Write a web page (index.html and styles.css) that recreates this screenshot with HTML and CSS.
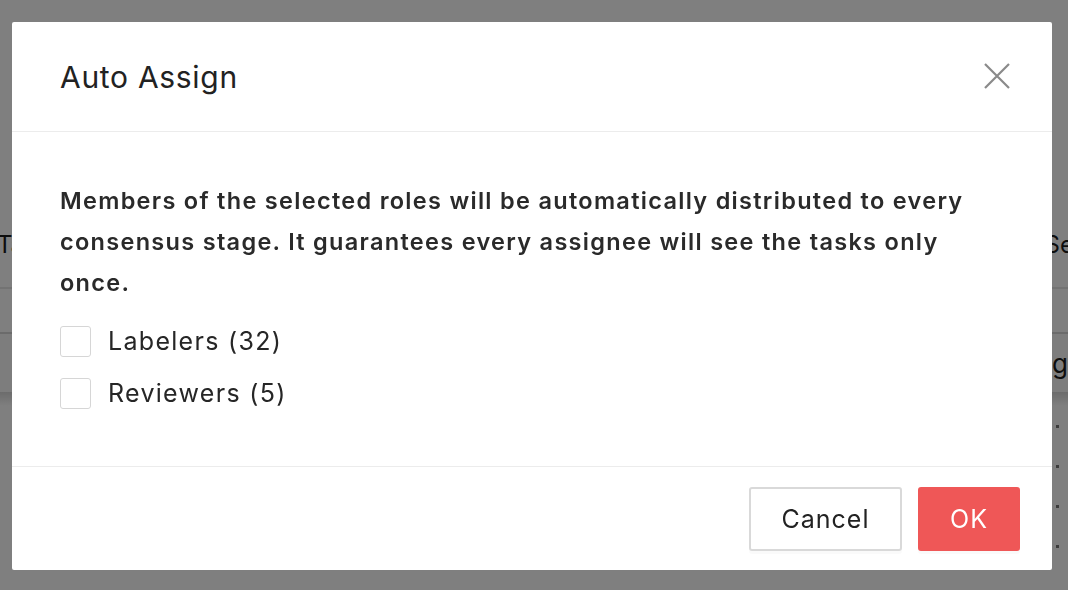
FILE: index.html
```html
<!DOCTYPE html>
<html lang="en">
<head>
<meta charset="utf-8">
<title>Auto Assign</title>
<link rel="stylesheet" href="styles.css">
</head>
<body>
<div class="page">
  <div class="page-spacer"></div>
  <div class="page-tabs">
    <span class="tab-left">Task list</span>
    <span class="tab-right">Se</span>
  </div>
  <div class="page-filter"></div>
  <div class="page-head">
    <span class="head-right">Tag</span>
  </div>
  <div class="page-shadow"></div>
  <div class="page-row"><span class="dot"></span></div>
  <div class="page-row"><span class="dot"></span></div>
  <div class="page-row"><span class="dot"></span></div>
  <div class="page-row"><span class="dot"></span></div>
</div>
<div class="overlay"></div>
<div class="modal" role="dialog">
  <div class="modal-header">
    <h2 class="modal-title">Auto Assign</h2>
    <button class="close" aria-label="Close">
      <svg viewBox="0 0 26 26" width="26" height="26"><path d="M1 1L25 25M25 1L1 25" stroke="#8a8a8a" stroke-width="2.2" fill="none"/></svg>
    </button>
  </div>
  <div class="modal-body">
    <p class="desc">Members of the selected roles will be automatically distributed to every consensus stage. It guarantees every assignee will see the tasks only once.</p>
    <label class="check-row"><span class="box"></span><span class="check-label">Labelers (32)</span></label>
    <label class="check-row"><span class="box"></span><span class="check-label">Reviewers (5)</span></label>
  </div>
  <div class="modal-footer">
    <button class="btn btn-default">Cancel</button>
    <button class="btn btn-primary">OK</button>
  </div>
</div>
</body>
</html>
```
FILE: styles.css
```css
html, body {
  margin: 0;
  padding: 0;
  width: 1068px;
  height: 590px;
  overflow: hidden;
  background: #ffffff;
  font-family: Inter, "Noto Sans", "Liberation Sans", sans-serif;
  color: #262626;
}

.page {
  width: 1068px;
  height: 590px;
  display: flex;
  flex-direction: column;
}
.page-spacer { height: 222px; }
.page-tabs {
  height: 44px;
  display: flex;
  justify-content: space-between;
  align-items: center;
  font-size: 24px;
  color: #1a1a1a;
  padding-bottom: 21px;
  border-bottom: 2px solid #e6e6e6;
}
.tab-left { margin-left: -3px; }
.tab-right { margin-right: -6px; }
.page-filter {
  height: 43px;
  border-bottom: 2px solid #d6d6d6;
}
.page-head {
  height: 58px;
  background: #fafafa;
  display: flex;
  justify-content: flex-end;
  align-items: center;
  font-size: 26px;
  color: #1a1a1a;
}
.head-right { margin-right: 0; }
.page-shadow {
  height: 14px;
  background: linear-gradient(#d8d8d8, #ffffff);
}
.page-row {
  height: 40px;
  display: flex;
  justify-content: flex-end;
  align-items: center;
}
.dot {
  width: 3px;
  height: 3px;
  background: #777;
  margin-right: 9px;
}

.overlay {
  position: fixed;
  inset: 0;
  background: rgba(0, 0, 0, 0.5);
}

.modal {
  position: fixed;
  left: 12px;
  top: 22px;
  width: 1040px;
  background: #ffffff;
  border-radius: 2px;
  display: flex;
  flex-direction: column;
}

.modal-header {
  height: 109px;
  border-bottom: 1px solid #ececec;
  display: flex;
  align-items: center;
  justify-content: space-between;
  padding: 0 42px 0 48px;
}
.modal-title {
  margin: 0;
  font-size: 30px;
  font-weight: 400;
  color: #222;
  letter-spacing: 0.7px;
}
.close {
  border: 0;
  background: transparent;
  padding: 0;
  width: 26px;
  height: 26px;
  display: flex;
  margin-top: -2px;
}

.modal-body {
  padding: 48px 48px 47px 48px;
  display: flex;
  flex-direction: column;
}
.desc {
  margin: 0 0 12px 0;
  font-size: 23.5px;
  font-weight: 600;
  line-height: 41px;
  color: #2a2a2a;
  letter-spacing: 1.3px;
}
.check-row {
  height: 52px;
  display: flex;
  align-items: center;
  gap: 17px;
}
.box {
  width: 29px;
  height: 29px;
  border: 1.5px solid #d6d6d6;
  border-radius: 3px;
  box-sizing: content-box;
}
.check-label {
  font-size: 25px;
  color: #262626;
  letter-spacing: 1.3px;
}

.modal-footer {
  border-top: 1px solid #ececec;
  padding: 20px 32px 19px 0;
  display: flex;
  justify-content: flex-end;
  gap: 16px;
}
.btn {
  height: 64px;
  font-family: inherit;
  font-size: 25px;
  border-radius: 3px;
  box-shadow: 0 3px 0 rgba(0, 0, 0, 0.02);
  cursor: pointer;
  letter-spacing: 1px;
}
.btn-default {
  width: 153px;
  background: #ffffff;
  border: 2px solid #d9d9d9;
  color: #222;
}
.btn-primary {
  width: 102px;
  background: #ef5757;
  border: 2px solid #ef5757;
  color: #ffffff;
}
```
